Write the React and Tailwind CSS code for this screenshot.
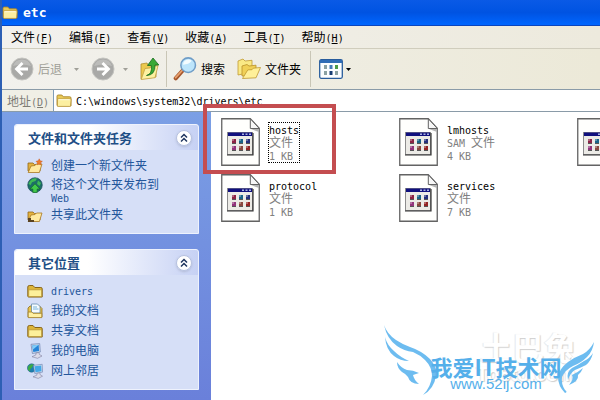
import React from "react";

const MENUS = [
  { label: "文件", hotkey: "F" },
  { label: "编辑", hotkey: "E" },
  { label: "查看", hotkey: "V" },
  { label: "收藏", hotkey: "A" },
  { label: "工具", hotkey: "T" },
  { label: "帮助", hotkey: "H" },
];

// the third entry has only its icon in view
const FILES = [
  { id: 1, name: "hosts", ext: "", size: "1 KB", focused: true },
  { id: 2, name: "lmhosts", ext: "SAM ", size: "4 KB" },
  { id: 3 },
  { id: 4, name: "protocol", ext: "", size: "1 KB" },
  { id: 5, name: "services", ext: "", size: "7 KB" },
];

const Latin = ({ children }) => (
  <span className="font-['DejaVu_Sans_Mono',monospace] text-[10px] leading-none">{children}</span>
);

const Hotkey = ({ letter }) => (
  <Latin>
    (<span className="underline underline-offset-1">{letter}</span>)
  </Latin>
);

const Folder = ({ className }) => (
  <svg viewBox="0 0 16 15" className={className} aria-hidden="true">
    <path d="M1 12.5V3.2Q1 2 2.2 2h3.6l1.6 1.8h6.4q1.2 0 1.2 1.2v8H1.6Z" fill="#e9c956" stroke="#a8842a" strokeWidth=".9" />
    <path d="M2 5.8h12.4q.8 0 .7.8l-.6 6q-.1.8-1 .8H2.3q-.8 0-.8-.8V6.4q0-.6.5-.6Z" fill="#fcefa0" stroke="#b48f32" strokeWidth=".7" />
    <path d="M2.5 6.7h11.3" stroke="#fffbe0" strokeWidth="1" />
  </svg>
);

const PlaceFolder = () => (
  <svg viewBox="0 0 16 16" className="h-4 w-4" aria-hidden="true">
    <path d="M.8 13.500V4Q.8 2.500 2.300 2.500H6l1.800 2h6q1.400 0 1.400 1.300v8.200H1.500Z" fill="#dcb53c" stroke="#86641a" />
    <path d="M2.500 6.800h11.200q.9 0 .9.900v5q0 .9-.9.900H2.500q-.8 0-.8-.9v-5q0-.9.800-.9Z" fill="#fdf09a" stroke="#b18e2c" strokeWidth=".7" />
  </svg>
);

const OpenFolder = ({ share }) => (
  <svg viewBox="0 0 16 16" className="h-4 w-4" aria-hidden="true">
    <path d="M1 13V5h5l1.5 1.5H13V13Z" fill="#e3b23f" stroke="#936518" strokeWidth=".8" />
    <path d="M1.2 14.5 4 8l4-.5L9.500 6H15l-2.600 8.500Z" fill="#ffe9a0" stroke="#a87720" strokeWidth=".8" />
    {share ? (
      <path d="M1 11h3v4H1ZM4 13h3v2H4Z" fill="#5a4321" />
    ) : (
      <path d="m12.200.8 1 2 2.200.5-1.700 1.500.2 2.200-1.900-1-1.900.8.300-2L9 3.300l2.200-.5Z" fill="#ed7b2c" stroke="#c14c16" strokeWidth=".4" />
    )}
  </svg>
);

const Publish = () => (
  <svg viewBox="0 0 16 16" className="h-4 w-4" aria-hidden="true">
    <circle cx="8" cy="8" r="7.3" fill="#1d6f68" stroke="#153f54" strokeWidth=".6" />
    <path d="M3 4q3-4 7-2.400L8.500 4 5 5.300 3.600 8 1.400 7ZM11 3.400l3 2.600-1.500 3-2.500-2Z" fill="#3fba55" />
    <path d="M8 6.800 13 12h-2.800v3.400H5.800V12H3Z" fill="#43ca4b" stroke="#136827" strokeWidth=".7" />
  </svg>
);

const Documents = () => (
  <svg viewBox="0 0 16 16" className="h-4 w-4" aria-hidden="true">
    <path d="M1 14V5l2-2h9.500L15 5.500V14Z" fill="#e8c34e" stroke="#8d6d1d" strokeWidth=".8" />
    <path d="M4.500 1h6L13 3.500V10H4.500Z" fill="#f5fbff" stroke="#5682a6" strokeWidth=".7" />
    <path d="M6 4h4M6 6h5.500" stroke="#58a3d0" strokeWidth=".8" />
    <path d="M1.200 9H5l1 1.300h8.800v4.300H1.200Z" fill="#fff0a2" stroke="#9f7d28" strokeWidth=".8" />
  </svg>
);

const Computer = () => (
  <svg viewBox="0 0 16 16" className="h-4 w-4" aria-hidden="true">
    <path d="M4 1.300 12.700.6 13.300 9 5.400 10.500Z" fill="#cfdcec" stroke="#6c7fae" strokeWidth=".7" />
    <path d="m5.200 2.400 6.500-.6.4 6.300-5.800 1Z" fill="#2484d8" />
    <path d="m5.200 2.400 6.500-.6L6 6.500Z" fill="#82cdf7" />
    <path d="m9 10 3-.5.4 2L15 13l-4.500 2.300L5 13.700 8.800 12Z" fill="#dcdcea" stroke="#8080a0" strokeWidth=".6" />
  </svg>
);

const Network = () => (
  <svg viewBox="0 0 16 16" className="h-4 w-4" aria-hidden="true">
    <circle cx="4.600" cy="5" r="4.200" fill="#1c7eb0" stroke="#275d80" strokeWidth=".5" />
    <path d="M1.300 3.300Q4 .3 6.500 1.600L5 4.400 3.300 6 3 8.500.8 6.500Z" fill="#3dac45" />
    <path d="m6.500 2.300 8.700-1 .4 7.800-7.800 1.400Z" fill="#cfdcec" stroke="#6c7fae" strokeWidth=".6" />
    <path d="m7.500 3.300 6.700-.8.3 5.800-6 1Z" fill="#43a8e8" />
    <path d="m10 10.300 2.800-.5.4 2 2.300 1.400-4.300 2.200L6 13.800l3.800-1.600Z" fill="#dcdcea" stroke="#8080a0" strokeWidth=".6" />
  </svg>
);

const RoundArrow = ({ flip }) => (
  <svg viewBox="0 0 24 24" className={flip ? "h-6 w-6 -scale-x-100" : "h-6 w-6"} aria-hidden="true">
    <circle cx="12" cy="12" r="11" fill="#a9a9a7" stroke="#c4c4c0" strokeWidth="1" />
    <path d="M3 9a9.5 9.5 0 0 1 18 0q-9-3-18 0Z" fill="#bcbcba" />
    <path d="M12.500 6 6.500 12l6 6M7 12h11" fill="none" stroke="#fff" strokeWidth="2.800" />
  </svg>
);

const Caret = ({ className }) => (
  <svg viewBox="0 0 5 3" className={className} aria-hidden="true">
    <path d="M0 0h5L2.500 3Z" fill="currentColor" />
  </svg>
);

const UpFolder = () => (
  <svg viewBox="0 0 20 24" className="h-6 w-5" aria-hidden="true">
    <path d="M1 22V7l6-1 1 2 8-1v13Z" fill="#ecc94e" stroke="#b39030" strokeWidth=".8" />
    <path d="M1.200 22.500 5 11.500l5-.5 1-1.500 7-.8-3 12Z" fill="#fdf1a0" stroke="#c1a044" strokeWidth=".8" />
    <path d="M6.500 18.500q6-1.500 4.800-10H7.500L13 1l5.800 7H15q.5 10-8.500 10.500Z" fill="#39a935" stroke="#176b1c" strokeWidth=".8" />
  </svg>
);

const Magnifier = () => (
  <svg viewBox="0 0 24 25" className="h-6 w-6" aria-hidden="true">
    <path d="m10.500 13-8.200 9.200" stroke="#a4552b" strokeWidth="4.200" strokeLinecap="round" />
    <path d="m10 13-7.800 8.500" stroke="#e9a26f" strokeWidth="1.800" strokeLinecap="round" />
    <circle cx="15.300" cy="8.500" r="7.600" fill="#bde5fb" stroke="#6f9dc7" strokeWidth="1.600" />
    <path d="M10 8a5.500 5.500 0 0 1 9-4q-3 4-9 4Z" fill="#f4fcff" />
  </svg>
);

const Folders = () => (
  <svg viewBox="0 0 24 22" className="h-[22px] w-6" aria-hidden="true">
    <path d="M1 17V3l5-2 2 2 7-.7V14Z" fill="#fae985" stroke="#c09a32" strokeWidth=".8" />
    <path d="M5 18V8l5-1.500L12 8l7-.8V17Z" fill="#f0d057" stroke="#b99028" strokeWidth=".8" />
    <path d="m5.500 20.500 5.300-8.600 4.200-.2 1.300-1.500 7.200-.7-4.500 10.300Z" fill="#fff09a" stroke="#bf9830" strokeWidth=".8" />
  </svg>
);

const ViewGrid = () => (
  <svg viewBox="0 0 24 20" className="h-5 w-6" aria-hidden="true">
    <rect x=".7" y=".7" width="22.600" height="18.600" rx="1.500" fill="#fbfdff" stroke="#285c9c" strokeWidth="1.300" />
    <path d="M1 1h22v3H1Z" fill="#2f6cb6" />
    <path d="M5 6h3v4H5ZM5 12h3v4H5ZM16 12h3v4h-3Z" fill="#8ba1a3" />
    <path d="M10.500 6h3v4h-3Z" fill="#4379b7" />
    <path d="M16 6h3v4h-3Z" fill="#4c9b47" />
    <path d="M10.500 12h3v4h-3Z" fill="#183d74" />
  </svg>
);

const FileIcon = () => (
  <svg viewBox="0 0 39 48" className="h-12 w-[39px] shrink-0" aria-hidden="true">
    <path d="M.75.75h28.500l9 9.500v37H.75Z" fill="#fffffd" stroke="#636363" strokeWidth="1.300" />
    <path d="m29.500 2 8.500 9v3l-8-3Z" fill="#b4b4b4" />
    <path d="M29.300.8v9.700h9Z" fill="#f7f7f7" stroke="#636363" />
    <rect x="6.500" y="14.500" width="25" height="22" fill="#ecebe6" stroke="#8c8c8c" />
    <path d="M6 37h26V15" fill="none" stroke="#333" strokeWidth="1.200" />
    <path d="M7 14.500h24V18H7Z" fill="#10107e" />
    <path d="M21 15.500h2v1.500h-2ZM24.500 15.500h2v1.500h-2ZM28 15.500h2v1.500h-2Z" fill="#aab4e0" />
    <path d="M11 21h4v4h-4Z" fill="#8c2446" />
    <path d="M18 21h4v4h-4Z" fill="#1a6488" />
    <path d="M25 21h4v4h-4Z" fill="#25307c" />
    <path d="M11 28h4v4h-4Z" fill="#92347c" />
    <path d="M18 28h4v4h-4Z" fill="#8a4840" />
    <path d="M25 28h4v4h-4Z" fill="#942424" />
    <path d="M11 21h2v2h-2ZM18 21h2v2h-2ZM25 21h2v2h-2ZM11 28h2v2h-2ZM18 28h2v2h-2ZM25 28h2v2h-2Z" fill="#fff" opacity=".3" />
    <path d="M11 25h4v1h-4ZM18 25h4v1h-4ZM25 25h4v1h-4ZM11 32h4v1h-4ZM18 32h4v1h-4ZM25 32h4v1h-4Z" fill="#555" />
  </svg>
);

const SidePanel = ({ title, children }) => (
  <section className="rounded-t-[3px] border border-[#eef2fd] bg-[#d6dff7]">
    <h2 className="flex h-[25px] items-center justify-between rounded-t-[3px] bg-linear-to-r from-white from-40% to-[#c6d1f4] pr-[6px] pl-[13px] text-[13px] font-bold text-[#1f4f86]">
      {title}
      <button type="button" aria-label="折叠" className="rounded-full shadow">
        <svg viewBox="0 0 16 16" className="h-4 w-4">
          <circle cx="8" cy="8" r="7.500" fill="#fff" stroke="#b5c0de" />
          <path d="m5 7.500 3-3 3 3M5 11.500l3-3 3 3" fill="none" stroke="#20365f" strokeWidth="1.500" />
        </svg>
      </button>
    </h2>
    {children}
  </section>
);

const SideLink = ({ icon, children }) => (
  <li>
    <a href="#" className="flex items-start gap-2">
      {icon}
      <span className="leading-[13px]">{children}</span>
    </a>
  </li>
);

const FileItem = ({ file }) => (
  <li>
    <button
      type="button"
      aria-label={file.name || "文件"}
      className="flex h-12 w-full items-center gap-2 text-left leading-3"
    >
      <FileIcon />
      {file.name && (
        <span
          className={
            file.focused
              ? "flex flex-col border border-dotted border-black text-[#808080]"
              : "flex flex-col border border-transparent text-[#808080]"
          }
        >
          <span className="text-black">
            <Latin>{file.name}</Latin>
          </span>
          <span className="whitespace-pre">
            <Latin>{file.ext}</Latin>文件
          </span>
          <span>
            <Latin>{file.size}</Latin>
          </span>
        </span>
      )}
    </button>
  </li>
);

const Watermark = () => (
  <div className="pointer-events-none absolute right-1 bottom-0 flex h-[76px] w-[216px] flex-col items-center justify-end pb-2 pl-4">
    <div className="absolute top-1 right-5 text-right font-bold text-white [text-shadow:1px_1px_1px_#d0d0d0,-1px_0_1px_#e8e8e8]">
      <p className="text-[32px] leading-9">土巴兔</p>
      <p className="font-['Liberation_Sans',sans-serif] text-xl leading-5">To8to.com</p>
    </div>
    <svg viewBox="0 0 216 76" className="absolute inset-0 h-full w-full" fill="#6dbcf0" aria-hidden="true">
      <path d="M4 1Q7 10 16 16 22 20 30 23 42 27 50 35 58 44 56 52 54 65 43 71 51 63 52 52 52 43 45 36 40 31 33 28 24 27 17 22 7 15 4 1Z" />
      <path d="M5 13Q7 21 14 27 20 33 29 37 20 37 14 32 6 26 5 13Z" />
      <path d="M17 38Q21 44 27 46 33 46 39 49L33 51Q34 56 39 60 30 60 28 53 26 50 22 48 17 44 17 38Z" />
      <path d="M214 18Q210 26 203 30 195 33 188 38 179 45 178 53 178 62 185 69 188 68 185 66 181 60 182 53 185 46 193 42 201 39 207 33 213 27 214 18Z" />
      <path d="M213 29Q211 37 206 41 200 44 195 46 190 49 188 56 186 48 192 44 198 41 204 37 210 34 213 29Z" />
      <path d="M203 44Q201 49 198 51 199 57 189 61 194 55 192 51 197 49 203 44Z" />
    </svg>
    <p className="relative text-[22px] leading-5 font-bold whitespace-nowrap text-[#55afea]">我爱IT技术网</p>
    <p className="relative font-['Liberation_Sans',sans-serif] text-[15px] leading-4 text-[#55afea]">www.52ij.com</p>
  </div>
);

export default function App() {
  return (
    <div className="flex min-h-screen flex-col overflow-hidden border-l-2 border-[#2d5fb4] bg-[#f0efe6] font-['Noto_Sans_CJK_SC',sans-serif] text-xs text-black">
      {/* Title bar */}
      <header className="flex h-[26px] items-center gap-[5px] border-b border-[#0b45bd] bg-linear-to-b from-[#0a5ae6] via-[#0053e2] to-[#0066ff]">
        <Folder className="h-[15px] w-4" />
        <h1 className="font-['DejaVu_Sans_Mono',monospace] text-[13px] leading-4 font-bold text-white">etc</h1>
      </header>

      {/* Menu bar */}
      <nav className="flex h-[23px] items-center gap-4 border-b border-[#d0cdbd] bg-linear-to-r from-[#f2f1ee] to-[#edeadd] pl-[9px]">
        {MENUS.map((menu) => (
          <button type="button" key={menu.hotkey} className="leading-4 whitespace-nowrap">
            {menu.label}
            <Hotkey letter={menu.hotkey} />
          </button>
        ))}
      </nav>

      {/* Toolbar */}
      <div className="flex h-10 items-center bg-linear-to-r from-[#f2f1ed] to-[#ece9d8] pl-2 whitespace-nowrap">
        <button type="button" className="flex items-center gap-1 text-[#a09f98]">
          <RoundArrow />
          后退
          <Caret className="ml-2 h-[3px] w-[5px]" />
        </button>
        <button type="button" aria-label="前进" className="ml-3 flex items-center gap-2 text-[#a09f98]">
          <RoundArrow flip />
          <Caret className="h-[3px] w-[5px]" />
        </button>
        <button type="button" aria-label="向上" className="ml-3">
          <UpFolder />
        </button>
        <span className="mx-[6px] h-9 w-px bg-[#c9c6b6]" />
        <button type="button" className="flex items-center gap-1">
          <Magnifier />
          搜索
        </button>
        <button type="button" className="ml-3 flex items-center gap-1">
          <Folders />
          文件夹
        </button>
        <span className="mr-2 ml-[9px] h-9 w-px bg-[#c9c6b6]" />
        <button type="button" aria-label="查看方式" className="flex items-center gap-[3px]">
          <ViewGrid />
          <Caret className="h-[3px] w-[5px]" />
        </button>
      </div>

      {/* Address bar */}
      <div className="flex h-[23px] items-stretch border-y border-[#8a9ba8]">
        <label htmlFor="address" className="flex w-[51px] items-center pl-[5px] whitespace-nowrap text-[#7d7c76]">
          <span>
            地址
            <Hotkey letter="D" />
          </span>
        </label>
        <div className="flex flex-1 items-center gap-1 border-l border-[#7f9db9] bg-white pl-[2px]">
          <Folder className="h-[15px] w-4" />
          <input
            id="address"
            type="text"
            defaultValue="C:\windows\system32\drivers\etc"
            className="min-w-0 flex-1 pt-[2px] font-['DejaVu_Sans_Mono',monospace] text-[10px] leading-4 outline-none"
          />
        </div>
      </div>

      <div className="flex flex-1">
        {/* Task pane */}
        <aside className="flex w-[209px] shrink-0 flex-col gap-[15px] bg-linear-to-b from-[#7b9fe5] to-[#6a80da] px-3 pt-3 pb-2">
          <SidePanel title="文件和文件夹任务">
            <ul className="flex flex-col gap-[3px] px-3 pt-2 pb-[10px] text-[#23569b]">
              <SideLink icon={<OpenFolder />}>创建一个新文件夹</SideLink>
              <SideLink icon={<Publish />}>
                将这个文件夹发布到
                <br />
                <Latin>Web</Latin>
              </SideLink>
              <SideLink icon={<OpenFolder share />}>共享此文件夹</SideLink>
            </ul>
          </SidePanel>
          <SidePanel title="其它位置">
            <ul className="flex flex-col gap-1 px-3 pt-2 pb-[10px] text-[#23569b]">
              <SideLink icon={<PlaceFolder />}>
                <Latin>drivers</Latin>
              </SideLink>
              <SideLink icon={<Documents />}>我的文档</SideLink>
              <SideLink icon={<PlaceFolder />}>共享文档</SideLink>
              <SideLink icon={<Computer />}>我的电脑</SideLink>
              <SideLink icon={<Network />}>网上邻居</SideLink>
            </ul>
          </SidePanel>
        </aside>

        {/* File list */}
        <main className="relative min-w-0 flex-1 bg-white">
          <ul className="grid grid-cols-[repeat(3,178px)] gap-y-2 overflow-x-clip pt-[6px] pl-[10px]">
            {FILES.map((file) => (
              <FileItem key={file.id} file={file} />
            ))}
          </ul>
          <div className="pointer-events-none absolute -top-2 -left-2 h-[70px] w-[133px] border-4 border-[#c44d50]" />
          <Watermark />
        </main>
      </div>
    </div>
  );
}
